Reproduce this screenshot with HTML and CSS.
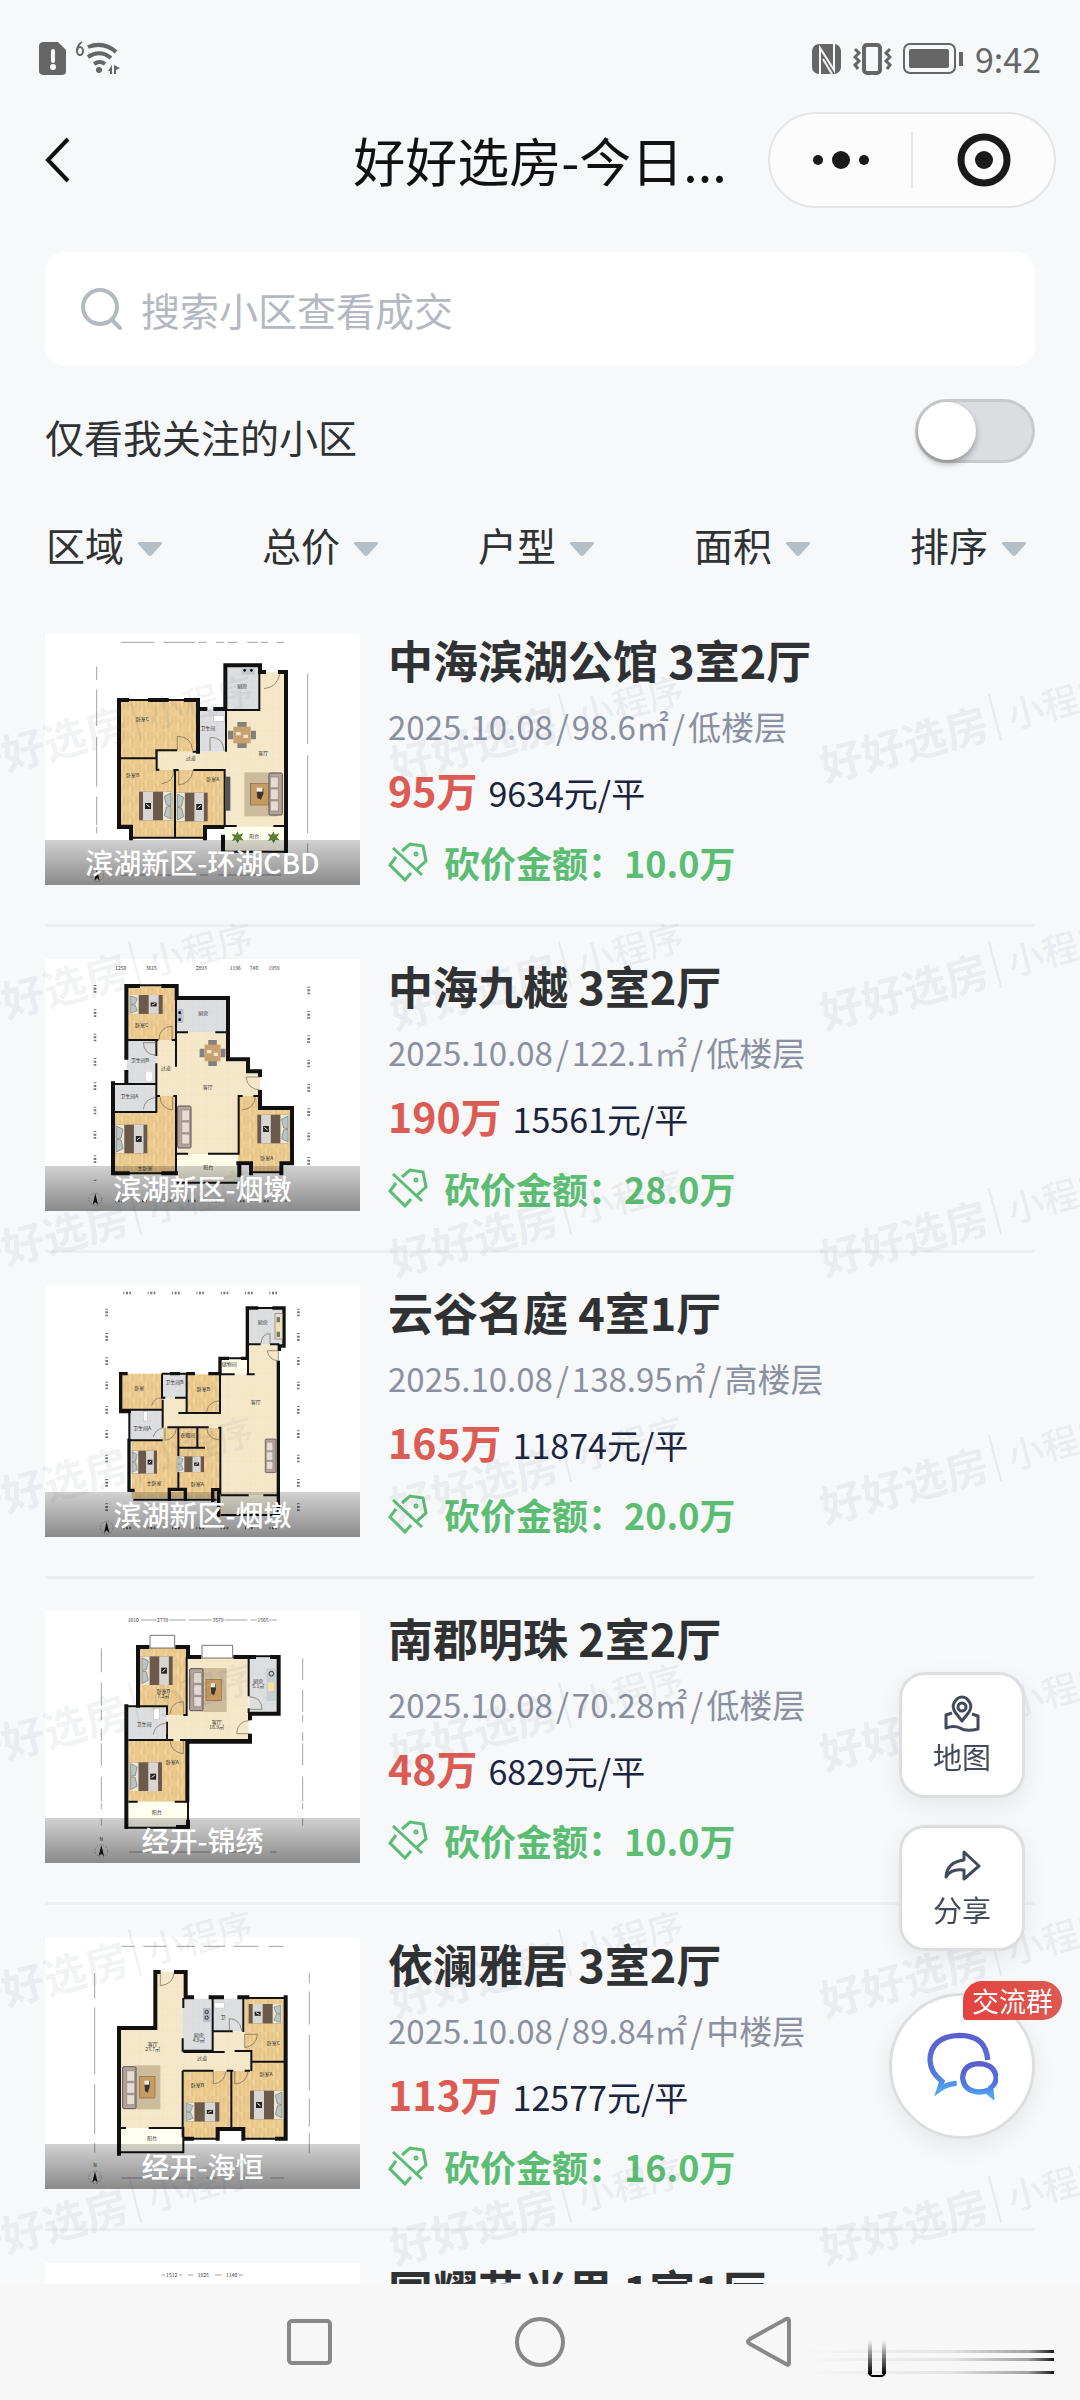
FILE: index.html
```html
<!DOCTYPE html>
<html lang="zh-CN">
<head>
  <meta charset="utf-8">
  <meta name="viewport" content="width=device-width">
  <title>好好选房</title>
  <link rel="stylesheet" href="styles.css">
</head>
<body>
  <!-- shared floor plan parts -->
  <svg class="defs" aria-hidden="true">
    <defs>
      <pattern id="wood" width="36" height="48" patternUnits="userSpaceOnUse">
        <rect width="36" height="48" fill="#ebcb90"/>
        <path d="M6 0v30M18 10v38M30 0v24" stroke="#e2bd7e" stroke-width="3"/>
        <path d="M12 20v28M24 0v18" stroke="#f1d6a4" stroke-width="4"/>
      </pattern>
      <pattern id="tile" width="22" height="22" patternUnits="userSpaceOnUse">
        <rect width="22" height="22" fill="#f5e8ca"/>
        <path d="M0 0h22M0 0v22" stroke="#f0e0bc" stroke-width="2"/>
      </pattern>
      <pattern id="grey" width="18" height="18" patternUnits="userSpaceOnUse">
        <rect width="18" height="18" fill="#dcdee0"/>
        <path d="M0 0h18M0 0v18" stroke="#cfd2d5" stroke-width="1"/>
      </pattern>
      <linearGradient id="chat" x1="0" y1="0" x2="0" y2="1">
        <stop offset="0" stop-color="#5a5fd0"/>
        <stop offset=".7" stop-color="#5277dd"/>
        <stop offset="1" stop-color="#4fa3f2"/>
      </linearGradient>
      <g id="bed">
        <rect width="100" height="86" fill="#6b5a4c"/>
        <rect width="28" height="86" fill="#efe6d2"/>
        <path d="M4 4l20 10-6 26-14 2zM4 82l20-10-6-26-14-2z" fill="#b9c4c6" stroke="#6d7474" stroke-width="2"/>
        <rect x="58" width="30" height="86" fill="#d9d6d2"/>
        <rect x="64" y="34" width="18" height="18" fill="#222"/>
        <path d="M68 46l10-8" stroke="#fff" stroke-width="3"/>
      </g>
      <g id="sofa">
        <rect width="40" height="126" rx="4" fill="#b3a39b" stroke="#5b5350" stroke-width="3"/>
        <path d="M12 12h24v32H12zM12 48h24v32H12zM12 84h24v30H12z" fill="#e6dcd5" stroke="#8b7d76" stroke-width="2"/>
      </g>
      <g id="rug">
        <rect width="76" height="132" fill="#cdbb9e"/>
        <rect x="14" y="34" width="46" height="64" fill="#c79a62" stroke="#8a6a42" stroke-width="2"/>
        <path d="M28 48h16v16l-6 18-8-5z" fill="#3b342d"/>
        <rect x="28" y="46" width="14" height="12" fill="#f3eee6"/>
      </g>
      <g id="dining">
        <path d="M28 0h28v16H28zM28 62h28v16H28zM0 26h16v26H0zM68 26h16v26H68z" fill="#85807c"/>
        <rect x="16" y="14" width="52" height="50" fill="#c9a170"/>
        <path d="M24 30h14v10H24zM46 38h14v10H46z" fill="#f1e5d0"/>
      </g>
      <g id="north">
        <circle r="19" fill="none" stroke="#555" stroke-dasharray="6 4"/>
        <path d="M0-18l8 34-8-8-8 8z" fill="#111"/>
      </g>
    </defs>
  </svg>

  <header class="top">
    <div class="status">
      <div class="status-side">
        <svg width="82" height="36" viewBox="0 0 82 36" fill="#666">
          <path d="M5 1h14l8 8v21q0 4-4 4H5q-5 0-5-4V5q0-4 5-4z"/>
          <path d="M14 10v10" stroke="#fff" stroke-width="4" stroke-linecap="round"/>
          <circle cx="14" cy="26" r="3" fill="#fff"/>
          <path d="M43 1q-5 3-5 9" fill="none" stroke="#666" stroke-width="2"/>
          <ellipse cx="41" cy="10" rx="3" ry="4" fill="none" stroke="#666" stroke-width="2"/>
          <g fill="none" stroke="#666" stroke-width="4">
            <path d="M49 6q16-6 28 5M49 16q12-8 23 1M55 23q6-4 11 0"/>
          </g>
          <circle cx="60" cy="29" r="3"/>
          <path d="M69 30l4-6v9h-2v-3zM75 24v9h2v-4l4-2z"/>
        </svg>
      </div>
      <div class="status-side">
        <svg width="30" height="32" viewBox="0 0 30 32">
          <rect y="1" width="29" height="30" rx="7" fill="#666"/>
          <path d="M8 31V5l14 22V1" fill="none" stroke="#f6f8fa" stroke-width="2"/>
          <path d="M11 16l9 15" stroke="#f6f8fa" stroke-width="2"/>
        </svg>
        <svg width="39" height="32" viewBox="0 0 39 32" fill="none" stroke="#666">
          <rect x="11" y="2" width="16" height="28" rx="3" stroke-width="4"/>
          <path d="M2 6l4 4-4 4 4 4-4 4 3 4M37 6l-4 4 4 4-4 4 4 4-3 4" stroke-width="3"/>
        </svg>
        <svg width="61" height="34" viewBox="0 0 61 34">
          <rect x="1" y="2" width="51" height="29" rx="6" fill="none" stroke="#666" stroke-width="2"/>
          <rect x="6" y="7" width="40" height="19" rx="2" fill="#666"/>
          <path d="M58 10v14" stroke="#666" stroke-width="4"/>
        </svg>
        <time>9:42</time>
      </div>
    </div>
    <nav class="titlebar">
      <button class="back" aria-label="返回">
        <svg width="26" height="48" viewBox="0 0 26 48"><path d="M24 3L4 24l20 21" fill="none" stroke="#111" stroke-width="4"/></svg>
      </button>
      <h1>好好选房-今日...</h1>
      <div class="capsule">
        <button aria-label="更多">
          <svg width="58" height="20" viewBox="0 0 58 20" fill="#1a1a1a"><circle cx="6" cy="10" r="5"/><circle cx="29" cy="10" r="9"/><circle cx="52" cy="10" r="5"/></svg>
        </button>
        <button aria-label="关闭">
          <svg width="54" height="54" viewBox="0 0 54 54"><circle cx="27" cy="27" r="23" fill="none" stroke="#1a1a1a" stroke-width="7"/><circle cx="27" cy="27" r="9" fill="#1a1a1a"/></svg>
        </button>
      </div>
    </nav>
  </header>

  <label class="search">
    <svg width="42" height="42" viewBox="0 0 42 42" fill="none" stroke="#b4b8c0" stroke-width="4"><circle cx="19" cy="19" r="17"/><path d="M31 32l8 8" stroke-linecap="round"/></svg>
    <input type="text" placeholder="搜索小区查看成交" aria-label="搜索小区">
  </label>

  <div class="follow">
    <label for="follow">仅看我关注的小区</label>
    <input type="checkbox" id="follow" class="switch">
  </div>

  <div class="filters">
    <label><select aria-label="区域"><option>区域</option></select><svg width="26" height="16" viewBox="0 0 26 16"><path d="M2 1h22q2 1 0 3L15 14q-2 2-4 0L2 4q-2-2 0-3z"/></svg></label>
    <label><select aria-label="总价"><option>总价</option></select><svg width="26" height="16" viewBox="0 0 26 16"><path d="M2 1h22q2 1 0 3L15 14q-2 2-4 0L2 4q-2-2 0-3z"/></svg></label>
    <label><select aria-label="户型"><option>户型</option></select><svg width="26" height="16" viewBox="0 0 26 16"><path d="M2 1h22q2 1 0 3L15 14q-2 2-4 0L2 4q-2-2 0-3z"/></svg></label>
    <label><select aria-label="面积"><option>面积</option></select><svg width="26" height="16" viewBox="0 0 26 16"><path d="M2 1h22q2 1 0 3L15 14q-2 2-4 0L2 4q-2-2 0-3z"/></svg></label>
    <label><select aria-label="排序"><option>排序</option></select><svg width="26" height="16" viewBox="0 0 26 16"><path d="M2 1h22q2 1 0 3L15 14q-2 2-4 0L2 4q-2-2 0-3z"/></svg></label>
  </div>

  <main class="list">
    <ul>
      <li class="house">
        <figure>
          <svg class="plan" viewBox="45 39 945 756">
            <path class="dim" d="M272 67h100M400 67h95M505 67h25M558 67h25M592 67h30M652 67h32M692 67h22M740 67h22M200 140v40M200 208v110M200 350v150M200 530v85M200 620v20M833 160v212M833 405v235M833 670v28"/>
            <path class="dim" d="M272 765h90M385 765h100M510 765h25M565 765h190"/>
            <path fill="url(#wood)" d="M267 240h235v155H380v20h57v35h146v170h-58v35H305v-35h-38z"/>
            <path fill="url(#tile)" d="M380 395h208V270h100V157h82v463H583V450H380z"/>
            <path fill="url(#grey)" d="M585 135h105v135H585zM503 268h82v127h-82z"/>
            <path fill="#fffff0" d="M580 620h188v74H580z"/>
            <path class="wall" d="M267 240v380h36v35M267 240h24M360 240h50M468 240h36v155M504 267h22M556 267h30V136h104v20h12M750 156h18v540M579 650v45M525 655v-34h52M303 621h-36"/>
            <path class="thin" d="M291 240h180M583 270h105V160M588 270v125M267 415h112v-24h62M488 395h20M380 391v58h8M430 450h16M490 450h94v168h36M435 450v205M730 618h38M305 653h225M580 695h190"/>
            <path class="door" d="M442 391v-42q42 0 46 42M540 352v40M542 352q38 0 40 40M395 491q36-4 36-40M446 450v45q36-4 44-45M750 160q-8 42-48 46"/>
            <use href="#dining" x="594" y="306"/>
            <use href="#rug" transform="translate(643 457) scale(1.3 1)"/>
            <use href="#sofa" transform="translate(757 459) scale(-1 1)"/>
            <rect x="587" y="470" width="14" height="102" fill="#555"/>
            <use href="#bed" transform="translate(427 515) scale(-1 1)"/>
            <use href="#bed" transform="translate(438 518) scale(.95 1)"/>
            <path d="M634 142h40v22h-40z" fill="#c5c8ca"/><circle cx="644" cy="151" r="4"/><circle cx="664" cy="151" r="4"/>
            <rect x="551" y="287" width="31" height="17" fill="#fff" stroke="#999"/>
            <path fill="#5d7d35" d="M622 634l5 10 13-4-7 12 8 9-13-1-5 10-6-10-11 3 6-11-8-11 13 3zM730 634l5 10 13-4-7 12 8 9-13-1-5 10-6-10-11 3 6-11-8-11 13 3z"/>
            <g class="names"><text x="337" y="302">卧室C</text><text x="533" y="331">卫生间</text><text x="637" y="203">厨房</text><text x="482" y="420">过道</text><text x="700" y="406">客厅</text><text x="308" y="470">卧室B</text><text x="548" y="484">卧室A</text><text x="673" y="655">阳台</text></g>
            <use href="#north" x="201" y="766"/>
          </svg>
          <figcaption>滨湖新区-环湖CBD</figcaption>
        </figure>
        <div class="info">
          <h2>中海滨湖公馆 3室2厅</h2>
          <p class="meta">2025.10.08<i>/</i>98.6㎡<i>/</i>低楼层</p>
          <p class="price"><b>95万</b>9634元/平</p>
          <p class="cut"><svg viewBox="0 0 40 40"><path d="M5 6l29 27M14 9l8-7 13 2 3 15-10 9M8 15l-6 8 15 15 6-7"/><circle cx="28" cy="12" r="1"/></svg>砍价金额：10.0万</p>
        </div>
      </li>
      <li class="house">
        <figure>
          <svg class="plan" viewBox="45 57 945 756">
            <g class="nums"><text x="272" y="90">1250</text><text x="364" y="90">3615</text><text x="514" y="90">2893</text><text x="616" y="90">1196</text><text x="672" y="90">740</text><text x="732" y="90">1959</text></g>
            <path class="dim dots" d="M195 135v590M836 140v580M255 783h525"/>
            <path fill="url(#wood)" d="M290 138h150v162H290zM380 468h60v230H250V516h130zM624 468h62v36h98v162h-36v30h-80v-30h-44z"/>
            <path fill="url(#tile)" d="M380 300h60v-25h152v90h60v30h38v73h-66v174H440V468h-60z"/>
            <path fill="url(#grey)" d="M440 174h152v102H440zM290 300h90v216H250v-84h40z"/>
            <path fill="#fffdea" d="M440 642h184v88H440z"/>
            <path class="wall" d="M289 353V138h35M400 138h40v36h154v184h60v36h36v11M289 396v30M249 430h0v270h44M690 456v48h96v166h-32v30M625 670h38v30M400 700h38M628 670v36"/>
            <path class="thin" d="M289 300h96M425 300h15M438 174v206M440 277h34M556 277h38M379 300v48M379 370v148M250 432h130M250 516h130M380 468h10M430 468h8v232M440 641h34M534 641h92V468h12M670 468h20M668 697h82M440 728h184M293 700h110M324 136h76M484 174h64"/>
            <path class="door" d="M386 300q2-38 40-42v42M340 308h38q-2 38-2 38-34-4-36-38M390 470q2 36 38 40v-40M340 508q4-32 38-36M636 510q38-4 40-40M690 411h-42q4 36 42 39"/>
            <use href="#bed" transform="translate(298 165) scale(1 .66)"/>
            <use href="#dining" transform="translate(509 300) scale(.92 1)"/>
            <use href="#sofa" x="443" y="498"/>
            <use href="#bed" transform="translate(256 554) scale(.96 1)"/>
            <use href="#bed" transform="translate(778 524) scale(-.96 1)"/>
            <rect x="442" y="207" width="18" height="42" fill="#b7bcd0"/><circle cx="449" cy="218" r="4"/><circle cx="449" cy="239" r="4"/>
            <rect x="348" y="395" width="18" height="28" rx="7" fill="#fff"/>
            <g class="names"><text x="335" y="262">卧室C</text><text x="520" y="225">厨房</text><text x="330" y="366">卫生间B</text><text x="407" y="390">过道</text><text x="533" y="446">客厅</text><text x="298" y="474">卫生间A</text><text x="345" y="690">主卧室</text><text x="710" y="660">卧室A</text><text x="535" y="688">阳台</text></g>
            <use href="#north" x="196" y="778"/>
          </svg>
          <figcaption>滨湖新区-烟墩</figcaption>
        </figure>
        <div class="info">
          <h2>中海九樾 3室2厅</h2>
          <p class="meta">2025.10.08<i>/</i>122.1㎡<i>/</i>低楼层</p>
          <p class="price"><b>190万</b>15561元/平</p>
          <p class="cut"><svg viewBox="0 0 40 40"><path d="M5 6l29 27M14 9l8-7 13 2 3 15-10 9M8 15l-6 8 15 15 6-7"/><circle cx="28" cy="12" r="1"/></svg>砍价金额：28.0万</p>
        </div>
      </li>
      <li class="house">
        <figure>
          <svg class="plan" viewBox="45 44 945 756">
            <path class="dim dots" d="M280 68h485M230 115v620M805 115v610M280 773h460"/>
            <path fill="url(#wood)" d="M272 310h126v108H272zM470 312h100v116H470zM398 472h172v212H305V510h93z"/>
            <path fill="url(#tile)" d="M398 382h72v46h100V312h84v-90h91v452H572V472H398z"/>
            <path fill="url(#grey)" d="M655 115h106v107H655zM398 312h72v70h-72zM298 420h100v90H298z"/>
            <path fill="#fffdea" d="M570 268h84v44h-84zM572 676h172v58H572z"/>
            <path class="wall wall-slim" d="M288 310h-16v114h26M297 510v150h12M425 310h20M490 310h-16M540 310h30v-46h22M638 264h14V113h28M732 113h30v114h-14v10M745 276v460M418 687v-30h48v30M548 690v-32h18v76"/>
            <path class="thin" d="M298 424v90M272 418h126v-30M396 312v70h10M435 382h35V312M470 382v45M445 428h127M530 428h40V312M570 312h44M650 312h24M654 264v48M654 222h38M720 222h28M398 420v52M298 510h100M412 471h124M445 471v190M502 471v60M445 532h80M565 472h6v200M572 675h84M700 675h44M310 688h250M572 734h172M660 113h80M590 264h50M395 310h80"/>
            <path class="door" d="M692 222q4-34 28-32v32M712 241h33v31q-30-4-33-31M365 405q10-24 28-22M530 425q4-30 38-34M405 472v38q30-4 34-36M530 474q4 32 36 34M370 500q6-24 28-26"/>
            <rect x="735" y="130" width="22" height="76" fill="#ece1b4" stroke="#777" stroke-width="2"/><path d="M740 140h10v16h-10zM740 184h10v16h-10z" fill="#777"/>
            <use href="#sofa" transform="translate(738 506) scale(-.8 .8)"/>
            <use href="#bed" transform="translate(303 541) scale(.78 .8)"/>
            <use href="#bed" transform="translate(440 558) scale(.82 .55)"/>
            <rect x="340" y="424" width="13" height="28" fill="#fff" stroke="#999"/>
            <g class="names"><text x="328" y="360">卧室</text><text x="433" y="340">卫生间B</text><text x="520" y="362">卧室B</text><text x="698" y="160">厨房</text><text x="598" y="286">储物间</text><text x="677" y="402">客厅</text><text x="336" y="478">卫生间A</text><text x="473" y="500">衣帽间</text><text x="372" y="644">主卧室</text><text x="502" y="648">卧室A</text></g>
            <use href="#north" x="230" y="772"/>
          </svg>
          <figcaption>滨湖新区-烟墩</figcaption>
        </figure>
        <div class="info">
          <h2>云谷名庭 4室1厅</h2>
          <p class="meta">2025.10.08<i>/</i>138.95㎡<i>/</i>高楼层</p>
          <p class="price"><b>165万</b>11874元/平</p>
          <p class="cut"><svg viewBox="0 0 40 40"><path d="M5 6l29 27M14 9l8-7 13 2 3 15-10 9M8 15l-6 8 15 15 6-7"/><circle cx="28" cy="12" r="1"/></svg>砍价金额：20.0万</p>
        </div>
      </li>
      <li class="house">
        <figure>
          <svg class="plan" viewBox="45 48 945 756">
            <g class="nums"><text x="310" y="81">1610</text><text x="398" y="81">2739</text><text x="564" y="81">3579</text><text x="699" y="81">1565</text></g>
            <path class="dim" d="M332 75h48M418 75h50M476 75h68M584 75h68M662 75h18M718 75h22M214 160v72M214 262v70M214 345v30M214 402v36M214 445v68M214 545v74M214 625v18M214 670v22M818 190v65M818 285v66M818 360v20M818 412v26M818 445v66M818 545v74M818 625v18M818 670v22M297 771h60M400 771h140M580 771h90M720 771h20"/>
            <path fill="url(#wood)" d="M325 158h147v202h-60v-22h-87zM295 436h177v184H295z"/>
            <path fill="url(#tile)" d="M474 188h182v250H412v-78h62z"/>
            <path fill="url(#grey)" d="M658 188h88v165h-88zM295 338h116v98H295z"/>
            <path fill="#fffff0" d="M295 620h178v76H295z"/>
            <path fill="#fff" stroke="#333" stroke-width="2" d="M360 121h74v38h-74zM516 151h92v38h-92z"/>
            <path class="wall" d="M352 156h-28v176M442 156h32v30h34M616 186h56M726 186h20v170h-86v14M660 422v18H472v176M289 334v362M474 680v16h-30"/>
            <path class="thin" d="M470 186v174h-10M289 334h122v26M411 380v55M295 435h135M450 435h210M656 190v114M656 340v14M295 620h28M434 620h40v60M289 698h150M678 184h44"/>
            <path class="door" d="M420 356q4-36 40-36v36M658 305q38 2 38 38h-38M660 376q-38 2-40 40h40M420 438q4 34 40 38v-38M370 418q4-30 40-34v34"/>
            <use href="#bed" transform="translate(332 184) scale(.96 1)"/>
            <use href="#bed" transform="translate(298 502) scale(.98 1)"/>
            <use href="#rug" x="514" y="219"/>
            <use href="#sofa" x="479" y="221"/>
            <rect x="709" y="220" width="28" height="98" fill="#c8cdd0"/><path d="M714 262h18v26h-18z" fill="#f3e3a0"/><circle cx="724" cy="236" r="7" fill="none" stroke="#333" stroke-width="3"/>
            <rect x="371" y="340" width="17" height="34" fill="#fff" stroke="#999"/>
            <g class="names"><text x="400" y="294">卧室B</text><text x="400" y="310">7.2㎡</text><text x="342" y="393">卫生间</text><text x="685" y="264">厨房</text><text x="685" y="280">5.1㎡</text><text x="560" y="386">客厅</text><text x="560" y="402">18.9㎡</text><text x="427" y="506">卧室A</text><text x="380" y="656">阳台</text></g>
            <text class="nums" x="214" y="738">N</text>
            <use href="#north" x="214" y="768"/>
          </svg>
          <figcaption>经开-锦绣</figcaption>
        </figure>
        <div class="info">
          <h2>南郡明珠 2室2厅</h2>
          <p class="meta">2025.10.08<i>/</i>70.28㎡<i>/</i>低楼层</p>
          <p class="price"><b>48万</b>6829元/平</p>
          <p class="cut"><svg viewBox="0 0 40 40"><path d="M5 6l29 27M14 9l8-7 13 2 3 15-10 9M8 15l-6 8 15 15 6-7"/><circle cx="28" cy="12" r="1"/></svg>砍价金额：10.0万</p>
        </div>
      </li>
      <li class="house">
        <figure>
          <svg class="plan" viewBox="45 51 945 756">
            <path class="dim" d="M274 79h40M340 79h70M440 79h55M520 79h65M610 79h75M715 79h45M194 160v75M194 262v200M194 492v150M194 668v30M838 160v30M838 214v100M838 345v165M838 535v85M838 640v60M274 774h70M385 774h105M530 774h30M640 774h45M722 774h40"/>
            <path fill="url(#wood)" d="M644 234h122v420H642v-28h-72v28H460V452h202v-60h-18z"/>
            <path fill="url(#tile)" d="M378 156h88v240h82v-62h96v60h18v58H458v172H270V326h108z"/>
            <path fill="url(#grey)" d="M458 236h88v156h-88zM548 236h94v98h-94z"/>
            <path fill="#fffff0" d="M272 624h188v72H272z"/>
            <path class="wall" d="M386 156h-10v168H267v377M438 156h29v76h19M542 232h34M628 232h24M767 232v424h-26M466 656h20M563 656v-29h77v29"/>
            <path class="thin" d="M460 234v30M458 355v37h90V236M548 334h60M640 236v100M460 396h124M614 393h50v60M664 425h100M458 452h92M458 452v200M590 452h20M604 452v174M660 452h-16M272 624h16M424 624h36v76M272 697h188M492 656h70M645 656h90M657 234h110M356 624h68"/>
            <path class="door" d="M391 156v41q38-4 41-38M598 334v-38q32 0 38 38M644 383v-40h38q-2 34-38 40M550 452v40q34-4 38-38M614 454v38q36-2 40-38"/>
            <use href="#rug" x="315" y="436"/>
            <use href="#sofa" x="278" y="440"/>
            <use href="#bed" transform="translate(756 252) scale(-1 .68)"/>
            <use href="#bed" transform="translate(464 547) scale(1.04 .67)"/>
            <use href="#bed" transform="translate(760 512) scale(-1 1)"/>
            <rect x="519" y="264" width="22" height="42" fill="#b7bcc2"/><circle cx="530" cy="276" r="5" fill="none" stroke="#333" stroke-width="3"/><circle cx="530" cy="293" r="5" fill="none" stroke="#333" stroke-width="3"/>
            <rect x="553" y="247" width="31" height="17" fill="#fff" stroke="#999"/>
            <g class="names"><text x="368" y="378">客厅</text><text x="368" y="394">23.7㎡</text><text x="506" y="350">厨房</text><text x="506" y="366">4.9㎡</text><text x="579" y="298">卫</text><text x="516" y="420">过道</text><text x="730" y="376">卧室C</text><text x="502" y="500">卧室B</text><text x="708" y="468">卧室A</text><text x="366" y="660">阳台</text></g>
            <text class="nums" x="195" y="742">N</text>
            <use href="#north" x="195" y="772"/>
          </svg>
          <figcaption>经开-海恒</figcaption>
        </figure>
        <div class="info">
          <h2>依澜雅居 3室2厅</h2>
          <p class="meta">2025.10.08<i>/</i>89.84㎡<i>/</i>中楼层</p>
          <p class="price"><b>113万</b>12577元/平</p>
          <p class="cut"><svg viewBox="0 0 40 40"><path d="M5 6l29 27M14 9l8-7 13 2 3 15-10 9M8 15l-6 8 15 15 6-7"/><circle cx="28" cy="12" r="1"/></svg>砍价金额：16.0万</p>
        </div>
      </li>
      <li class="house">
        <figure>
          <svg class="plan" viewBox="0 0 945 756">
            <g class="nums"><text x="380" y="42">1512</text><text x="475" y="42">1925</text><text x="560" y="42">1140</text></g>
            <path class="dim" d="M350 36h10M402 36h10M428 36h16M510 36h20M582 36h12"/>
          </svg>
        </figure>
        <div class="info">
          <h2>国耀花光里 1室1厅</h2>
        </div>
      </li>
    </ul>
    <div class="marks" id="marks" aria-hidden="true"></div>
  </main>

  <aside class="floats">
    <button class="tool">
      <svg width="38" height="38" viewBox="0 0 38 38" fill="none" stroke="#434a5c" stroke-width="3" stroke-linejoin="round">
        <path d="M19 26l-7-9q-3-5-1-9 3-6 8-6t8 6q2 4-1 9z"/><circle cx="19" cy="12" r="4"/>
        <path d="M9 18l-6 2v13q8-3 14 0 6 4 18 1V21l-6-2"/>
      </svg>
      地图
    </button>
    <button class="tool">
      <svg width="38" height="38" viewBox="0 0 38 38" fill="none" stroke="#434a5c" stroke-width="3" stroke-linejoin="round">
        <path d="M21 4l15 14-15 13v-9Q8 20 3 29 4 14 21 12z"/>
      </svg>
      分享
    </button>
    <button class="group" aria-label="交流群">
      <svg width="72" height="68" viewBox="0 0 216 204" fill="none" stroke="url(#chat)" stroke-width="16">
        <path d="M185 84Q180 10 100 10 12 14 12 86q2 36 36 62l-8 24q22-16 52-18"/>
        <path d="M158 95q-46 2-48 43 4 40 50 42 14 0 22-4l14 12-2-20q18-14 16-34-6-38-52-39z"/>
      </svg>
      <span>交流群</span>
    </button>
  </aside>

  <footer class="sysbar">
    <button aria-label="最近任务"><svg width="52" height="52" viewBox="0 0 52 52"><rect x="6" y="5" width="41" height="42" rx="3"/></svg></button>
    <button aria-label="主屏幕"><svg width="52" height="52" viewBox="0 0 52 52"><circle cx="26" cy="26" r="23"/></svg></button>
    <button aria-label="返回"><svg width="52" height="52" viewBox="0 0 52 52"><path d="M44 5v42q0 3-3 1L5 28q-4-2 0-5L41 3q3-1 3 2z"/></svg></button>
    <svg class="streaks" width="266" height="40" viewBox="0 0 266 40" aria-hidden="true">
      <defs>
        <linearGradient id="fadeX"><stop offset="0" stop-opacity="0"/><stop offset=".6" stop-opacity=".08"/><stop offset=".9" stop-opacity=".35"/><stop offset="1" stop-opacity=".9"/></linearGradient>
        <linearGradient id="fadeY" x2="0" y2="1"><stop offset="0" stop-opacity="0"/><stop offset="1"/></linearGradient>
      </defs>
      <path fill="url(#fadeX)" d="M10 10h254v3H10zM10 18h254v3H10zM10 31h254v3H10z"/>
      <path fill="url(#fadeY)" d="M78 0h4v34h-4zM92 0h4v34h-4z"/>
      <path d="M79 33q1 3 4 3h8q3 0 4-3" fill="none" stroke="#000" stroke-width="2"/>
    </svg>
  </footer>

  <script>
    // repeat the brand mark over the list
    var marks = document.getElementById('marks');
    for (var i = 0; i < 21; i++) {
      marks.innerHTML += '<div><p><b>好好选房</b><span>小程序</span></p></div>';
    }
  </script>
</body>
</html>
```
FILE: styles.css
```css
* {
  box-sizing: border-box;
}
body {
  margin: 0;
  height: 100vh;
  display: flex;
  flex-direction: column;
  overflow: hidden;
  background: #f6f8fa;
  color: #303133;
  font-family: "Noto Sans CJK SC", sans-serif;
  font-size: 39px;
}
h1, h2, p, ul, figure {
  margin: 0;
  padding: 0;
}
button, input, select {
  font: inherit;
  color: inherit;
  border: 0;
  padding: 0;
  background: none;
}
svg {
  display: block;
  flex: none;
}
.defs {
  position: absolute;
  width: 0;
  height: 0;
}

/* header */
.status {
  display: flex;
  justify-content: space-between;
  padding: 34px 39px 28px;
  color: #666;
  font-size: 34px;
  line-height: 50px;
}
.status-side {
  display: flex;
  align-items: center;
  gap: 11px;
}
.titlebar {
  display: grid;
  grid-template-columns: 312px 1fr 312px;
  align-items: center;
}
.back {
  justify-self: start;
  padding: 12px 44px;
}
h1 {
  color: #111;
  font-size: 52px;
  font-weight: 400;
  line-height: 72px;
  text-align: center;
  white-space: nowrap;
}
.capsule {
  display: flex;
  height: 96px;
  margin-right: 24px;
  padding: 18px 0;
  border: 2px solid #e4e5e6;
  border-radius: 48px;
  background: #fcfcfd;
}
.capsule button {
  flex: 1;
  display: flex;
  align-items: center;
  justify-content: center;
}
.capsule button + button {
  border-left: 2px solid #e4e5e6;
}

/* search + switch */
.search {
  display: flex;
  align-items: center;
  gap: 18px;
  height: 114px;
  margin: 44px 45px 0;
  padding: 0 36px;
  border-radius: 20px;
  background: #fff;
}
.search input {
  flex: 1;
  min-width: 0;
  outline: none;
}
.search input::placeholder {
  color: #b4b8c0;
}
.follow {
  display: flex;
  justify-content: space-between;
  margin: 33px 45px 0;
  line-height: 74px;
}
.switch {
  appearance: none;
  width: 120px;
  height: 64px;
  margin: 0;
  border: 3px solid #c9cacc;
  border-radius: 32px;
  background: #dcdde1;
}
.switch::before {
  content: "";
  display: block;
  width: 58px;
  height: 58px;
  border-radius: 50%;
  background: #fff;
  box-shadow: 0 4px 6px rgba(0, 0, 0, .3);
}
.switch:checked::before {
  margin-left: 56px;
}
.filters {
  display: flex;
  height: 100px;
  margin: 21px 0 7px;
}
.filters label {
  flex: 1;
  display: flex;
  align-items: center;
  gap: 12px;
  padding-left: 46px;
}
.filters select {
  appearance: none;
}
.filters svg {
  margin-top: 9px;
  fill: #b4bfc8;
}

/* house list */
.list {
  position: relative;
  flex: 1;
  min-height: 0;
  overflow: hidden;
}
.list ul {
  list-style: none;
  padding: 0 45px;
}
.house {
  display: flex;
  gap: 28px;
  padding: 32px 0 39px;
  border-bottom: 3px solid #edeef0;
}
figure {
  position: relative;
  flex: none;
  width: 315px;
  height: 252px;
  background: #fff;
}
figcaption {
  position: absolute;
  left: 0;
  right: 0;
  bottom: 0;
  color: #fff;
  font-size: 28px;
  font-weight: 500;
  line-height: 45px;
  text-align: center;
  background: linear-gradient(rgba(0, 0, 0, .18), rgba(0, 0, 0, .46));
}
.info {
  white-space: nowrap;
}
h2 {
  font-size: 45px;
  font-weight: 700;
  line-height: 54px;
}
.meta {
  margin-top: 19px;
  color: #8a909f;
  font-size: 33px;
  line-height: 40px;
}
.meta i {
  margin: 0 3px;
  font-style: normal;
}
.price {
  display: flex;
  align-items: baseline;
  gap: 11px;
  height: 48px;
  margin-top: 19px;
  color: #1a2440;
  font-size: 34px;
  line-height: 48px;
}
.price b {
  color: #dc5c53;
  font-size: 41px;
}
.cut {
  display: flex;
  align-items: center;
  gap: 16px;
  margin-top: 29px;
  color: #5bbd72;
  font-size: 36px;
  font-weight: 700;
  line-height: 40px;
}
.cut svg {
  width: 40px;
  height: 40px;
  fill: none;
  stroke: #5bbd72;
  stroke-width: 3;
}
.marks {
  position: absolute;
  top: 0;
  left: -109px;
  display: grid;
  grid-template-columns: repeat(3, 430px);
  grid-auto-rows: 247px;
  place-items: center;
  pointer-events: none;
}
.marks p {
  display: flex;
  align-items: center;
  color: rgba(60, 70, 90, .08);
  font-size: 43px;
  line-height: 48px;
  white-space: nowrap;
  transform: rotate(-15deg);
}
.marks span {
  margin-left: 8px;
  padding-left: 12px;
  border-left: 2px solid rgba(60, 70, 90, .08);
  font-size: 36px;
  font-weight: 500;
}

/* floor plans */
.plan {
  width: 100%;
  height: 100%;
}
.wall {
  fill: none;
  stroke: #111;
  stroke-width: 12;
  stroke-linecap: square;
}
.wall-slim {
  stroke-width: 10;
}
.thin {
  fill: none;
  stroke: #111;
  stroke-width: 6;
}
.door {
  fill: none;
  stroke: #6d6250;
  stroke-width: 2;
}
.dim {
  fill: none;
  stroke: #777;
  stroke-width: 2;
}
.dots {
  stroke-width: 8;
  stroke-dasharray: 3 5 6 4 5 50;
}
.names, .nums {
  fill: #333;
  font-size: 15px;
  text-anchor: middle;
}

/* floating tools */
.floats {
  position: fixed;
  right: 45px;
  bottom: 261px;
  display: flex;
  flex-direction: column;
  align-items: center;
  gap: 27px;
}
.tool {
  display: flex;
  flex-direction: column;
  align-items: center;
  gap: 3px;
  width: 126px;
  height: 126px;
  padding-top: 20px;
  border: 3px solid #dddee0;
  border-radius: 26px;
  background: #fff;
  box-shadow: 0 8px 24px rgba(0, 0, 0, .07);
  color: #434a5c;
  font-size: 29px;
  line-height: 40px;
}
.group {
  position: relative;
  display: flex;
  align-items: center;
  justify-content: center;
  width: 146px;
  height: 146px;
  margin-top: 15px;
  border: 3px solid #dddee0;
  border-radius: 50%;
  background: #fff;
  box-shadow: 0 8px 24px rgba(0, 0, 0, .07);
}
.group span {
  position: absolute;
  top: -15px;
  right: -30px;
  padding: 0 9px;
  border-radius: 20px 20px 20px 4px;
  background: linear-gradient(90deg, #e5423e, #dd5a52);
  color: #fff;
  font-size: 27px;
  line-height: 39px;
}

/* system bar */
.sysbar {
  position: relative;
  display: flex;
  justify-content: center;
  align-items: center;
  gap: 179px;
  height: 116px;
  background: #f7f7f7;
}
.sysbar button svg {
  fill: none;
  stroke: #888;
  stroke-width: 4;
}
.streaks {
  position: absolute;
  right: 24px;
  bottom: 20px;
}
```
